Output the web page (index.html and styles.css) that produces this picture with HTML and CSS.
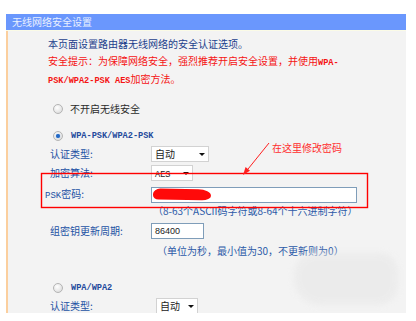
FILE: index.html
```html
<!DOCTYPE html>
<html lang="zh-CN">
<head>
<meta charset="utf-8">
<title>无线网络安全设置</title>
<link rel="stylesheet" href="styles.css">
</head>
<body>
<div class="panel">
  <div class="hd">无线网络安全设置</div>
  <div class="bd">
    <p class="intro">本页面设置路由器无线网络的安全认证选项。</p>
    <p class="warn">安全提示：为保障网络安全，强烈推荐开启安全设置，并使用<span class="mono">WPA-</span><br><span class="mono">PSK/WPA2-PSK AES</span>加密方法。</p>

    <div class="opt opt-first"><span class="radio"></span><span class="opt-text">不开启无线安全</span></div>

    <div class="opt opt-second"><span class="radio on"></span><span class="mono opt-mono">WPA-PSK/WPA2-PSK</span></div>
    <div class="row r-auth"><span class="lbl">认证类型:</span><span class="sel sel-auth">自动<i class="arr"></i></span></div>
    <div class="row r-alg"><span class="lbl">加密算法:</span><span class="sel sel-alg"><span class="mono sel-mono">AES</span><i class="arr"></i></span></div>
    <div class="row r-psk"><span class="lbl lbl-psk"><span class="mono lbl-mono">PSK</span>密码:</span><span class="inp inp-psk"><span class="scribble"></span></span></div>
    <p class="hint hint-psk">（8-63个ASCII码字符或8-64个十六进制字符）</p>
    <div class="row r-group"><span class="lbl">组密钥更新周期:</span><span class="inp inp-num">86400</span></div>
    <p class="hint hint-unit">（单位为秒，最小值为30，不更新则为0）</p>

    <div class="opt opt-third"><span class="radio"></span><span class="mono opt-mono">WPA/WPA2</span></div>
    <div class="row r-auth2"><span class="lbl">认证类型:</span><span class="sel sel-auth2">自动<i class="arr"></i></span></div>
    <div class="row r-alg2"><span class="lbl-stub"></span><span class="sel sel-auth2"></span></div>

    <div class="mark-text">在这里修改密码</div>
    <svg class="mark-line" width="400" height="282" viewBox="0 0 400 282">
      <rect x="33.5" y="142.5" width="326" height="34" fill="none" stroke="#ff0000" stroke-width="1.4"/>
      <line x1="261" y1="112" x2="236" y2="143" stroke="#ff2020" stroke-width="1"/>
      <polygon points="235,144 242,139.8 237.6,136" fill="#ff2020"/>
    </svg>
    <div class="wm"></div>
  </div>
</div>
</body>
</html>
```

FILE: styles.css
```css
* { box-sizing: border-box; }
html, body { margin: 0; padding: 0; background: #ffffff; }
body {
  font-family: "Noto Sans CJK SC", "Noto Sans", sans-serif;
  font-size: 10px;
  line-height: 16px;
}
p { margin: 0; }

.panel {
  margin: 14px 0 0 6px;
  width: 400px;
}
.hd {
  height: 17px;
  background: #6a97fd;
  color: #e8efff;
  padding-left: 6px;
  line-height: 16px;
  font-size: 10px;
  border-bottom: 1px solid #fbfbe6;
}
.bd {
  position: relative;
  height: 282px;
  overflow: hidden;
  background: #f3f3f3;
  border-left: 2px solid #fbcf9e;
  padding-top: 5px;
}

.mono {
  font-family: "Liberation Mono", monospace;
  font-size: 8.6px;
  font-weight: bold;
}

.intro {
  padding-left: 40px;
  color: #1c3f8c;
  white-space: nowrap;
  margin-bottom: 1px;
}
.warn {
  padding-left: 40px;
  color: #f51414;
  line-height: 15px;
  white-space: nowrap;
}

.opt {
  display: flex;
  align-items: center;
  height: 16px;
  padding-left: 45px;
}
.opt-first { margin-top: 12px; }
.opt-second { margin-top: 11px; }
.opt-third { margin-top: 21px; }
.opt-text { color: #2a2a2a; margin-left: 7px; }
.opt-mono { color: #1f4a9c; margin-left: 8px; }

.radio {
  width: 10px;
  height: 10px;
  border-radius: 50%;
  border: 1px solid #b4b4b4;
  background: radial-gradient(circle at 40% 35%, #ffffff 0%, #e2e2e2 70%, #cfcfcf 100%);
  position: relative;
  flex: none;
}
.radio.on::after {
  content: "";
  position: absolute;
  left: 2px;
  top: 2px;
  width: 4px;
  height: 4px;
  border-radius: 50%;
  background: #2468c4;
  box-shadow: 0 0 1px #4a90e0;
}

.row {
  display: flex;
  align-items: center;
  height: 16px;
  padding-left: 42px;
}
.lbl {
  width: 101px;
  flex: none;
  color: #2352a4;
  white-space: nowrap;
}
.lbl-psk { margin-left: -5px; width: 106px; }
.lbl-mono { font-weight: normal; font-size: 9px; }
.lbl-stub { width: 106px; flex: none; }

.r-auth { margin-top: 2px; }
.r-alg { margin-top: 3px; }
.r-psk { margin-top: 6px; }
.r-group { margin-top: 4px; }
.r-auth2 { margin-top: 2px; }
.r-auth2 .lbl { width: 106px; }
.r-alg2 { margin-top: 3px; }

.sel {
  position: relative;
  height: 16px;
  background: #ffffff;
  border: 1px solid #d2d2d2;
  color: #222;
  padding-left: 3px;
  line-height: 14px;
  font-size: 10px;
}
.sel-auth { width: 58px; }
.sel-alg { width: 42px; }
.sel-auth2 { width: 42px; }
.sel-mono { font-weight: normal; color: #222; font-size: 8.6px; }
.arr {
  position: absolute;
  right: 3px;
  top: 6px;
  width: 0;
  height: 0;
  border-left: 3px solid transparent;
  border-right: 3px solid transparent;
  border-top: 3px solid #111;
}

.inp {
  position: relative;
  height: 16px;
  background: #ffffff;
  border: 1px solid #7f9db9;
  font-family: "Liberation Sans", Arial, sans-serif;
  font-size: 9px;
  line-height: 14px;
  color: #222;
  padding-left: 3px;
}
.inp-psk { width: 206px; }
.inp-num { width: 53px; }
.scribble {
  position: absolute;
  left: 1px;
  top: 1px;
  width: 58px;
  height: 11px;
  background: #ff0a0a;
  border-radius: 8px 14px 10px 6px / 6px 7px 5px 5px;
  transform: rotate(1deg);
}

.hint {
  color: #2c5aa8;
  white-space: nowrap;
}
.hint-psk { padding-left: 145px; margin-top: 0; }
.hint-unit { padding-left: 149px; margin-top: 4px; }

.mark-text {
  position: absolute;
  left: 264px;
  top: 109px;
  color: #ff2d2d;
  font-size: 10px;
  line-height: 16px;
  white-space: nowrap;
}
.mark-line {
  position: absolute;
  left: 0;
  top: 0;
}
.wm {
  position: absolute;
  left: 286px;
  top: 222px;
  width: 104px;
  height: 52px;
  border-radius: 22px 18px 20px 26px;
  background: #e9e9e9;
  opacity: 0.7;
  filter: blur(3px);
}
```
